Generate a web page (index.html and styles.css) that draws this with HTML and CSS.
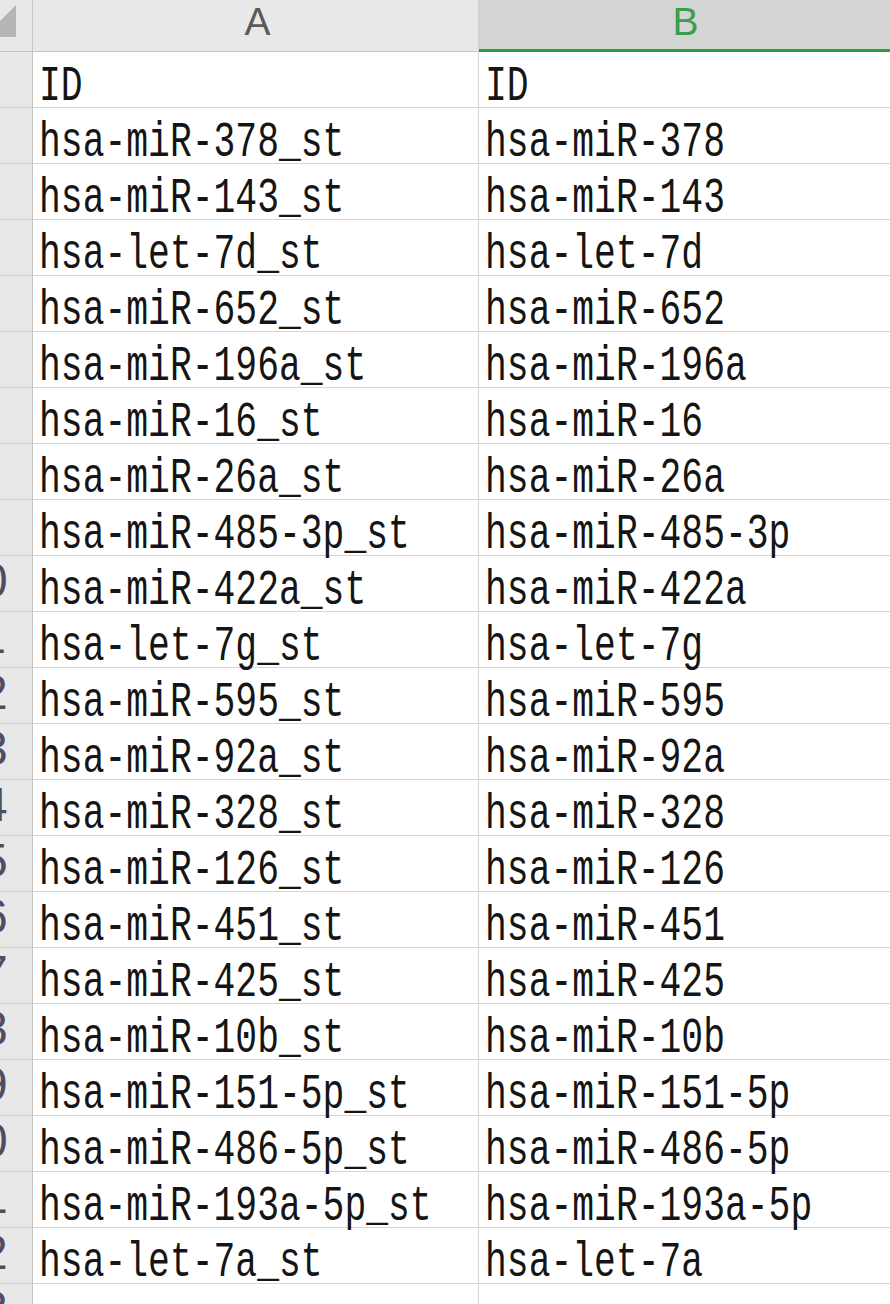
FILE: index.html
```html
<!DOCTYPE html>
<html>
<head>
<meta charset="utf-8">
<link rel="stylesheet" href="styles.css">
<title>Sheet</title>
</head>
<body>
<div class="sheet">
  <div class="corner"><svg class="tri" width="17" height="40" viewBox="0 0 17 40"><polygon points="16,5 16,37 0,37 0,21" fill="#b5b5b5"/></svg></div>
  <div class="colhead">A</div>
  <div class="colhead sel">B</div>

  <div class="rowhead"><span class="num">1</span></div><div class="cell"><span class="t">ID</span></div><div class="cell"><span class="t">ID</span></div>
  <div class="rowhead"><span class="num">2</span></div><div class="cell"><span class="t">hsa-miR-378_st</span></div><div class="cell"><span class="t">hsa-miR-378</span></div>
  <div class="rowhead"><span class="num">3</span></div><div class="cell"><span class="t">hsa-miR-143_st</span></div><div class="cell"><span class="t">hsa-miR-143</span></div>
  <div class="rowhead"><span class="num">4</span></div><div class="cell"><span class="t">hsa-let-7d_st</span></div><div class="cell"><span class="t">hsa-let-7d</span></div>
  <div class="rowhead"><span class="num">5</span></div><div class="cell"><span class="t">hsa-miR-652_st</span></div><div class="cell"><span class="t">hsa-miR-652</span></div>
  <div class="rowhead"><span class="num">6</span></div><div class="cell"><span class="t">hsa-miR-196a_st</span></div><div class="cell"><span class="t">hsa-miR-196a</span></div>
  <div class="rowhead"><span class="num">7</span></div><div class="cell"><span class="t">hsa-miR-16_st</span></div><div class="cell"><span class="t">hsa-miR-16</span></div>
  <div class="rowhead"><span class="num">8</span></div><div class="cell"><span class="t">hsa-miR-26a_st</span></div><div class="cell"><span class="t">hsa-miR-26a</span></div>
  <div class="rowhead"><span class="num">9</span></div><div class="cell"><span class="t">hsa-miR-485-3p_st</span></div><div class="cell"><span class="t">hsa-miR-485-3p</span></div>
  <div class="rowhead"><span class="num">10</span></div><div class="cell"><span class="t">hsa-miR-422a_st</span></div><div class="cell"><span class="t">hsa-miR-422a</span></div>
  <div class="rowhead"><span class="num">11</span></div><div class="cell"><span class="t">hsa-let-7g_st</span></div><div class="cell"><span class="t">hsa-let-7g</span></div>
  <div class="rowhead"><span class="num">12</span></div><div class="cell"><span class="t">hsa-miR-595_st</span></div><div class="cell"><span class="t">hsa-miR-595</span></div>
  <div class="rowhead"><span class="num">13</span></div><div class="cell"><span class="t">hsa-miR-92a_st</span></div><div class="cell"><span class="t">hsa-miR-92a</span></div>
  <div class="rowhead"><span class="num">14</span></div><div class="cell"><span class="t">hsa-miR-328_st</span></div><div class="cell"><span class="t">hsa-miR-328</span></div>
  <div class="rowhead"><span class="num">15</span></div><div class="cell"><span class="t">hsa-miR-126_st</span></div><div class="cell"><span class="t">hsa-miR-126</span></div>
  <div class="rowhead"><span class="num">16</span></div><div class="cell"><span class="t">hsa-miR-451_st</span></div><div class="cell"><span class="t">hsa-miR-451</span></div>
  <div class="rowhead"><span class="num">17</span></div><div class="cell"><span class="t">hsa-miR-425_st</span></div><div class="cell"><span class="t">hsa-miR-425</span></div>
  <div class="rowhead"><span class="num">18</span></div><div class="cell"><span class="t">hsa-miR-10b_st</span></div><div class="cell"><span class="t">hsa-miR-10b</span></div>
  <div class="rowhead"><span class="num">19</span></div><div class="cell"><span class="t">hsa-miR-151-5p_st</span></div><div class="cell"><span class="t">hsa-miR-151-5p</span></div>
  <div class="rowhead"><span class="num">20</span></div><div class="cell"><span class="t">hsa-miR-486-5p_st</span></div><div class="cell"><span class="t">hsa-miR-486-5p</span></div>
  <div class="rowhead"><span class="num">21</span></div><div class="cell"><span class="t">hsa-miR-193a-5p_st</span></div><div class="cell"><span class="t">hsa-miR-193a-5p</span></div>
  <div class="rowhead"><span class="num">22</span></div><div class="cell"><span class="t">hsa-let-7a_st</span></div><div class="cell"><span class="t">hsa-let-7a</span></div>
  <div class="rowhead"><span class="num">23</span></div><div class="cell"></div><div class="cell"></div>
</div>
</body>
</html>
```

FILE: styles.css
```css
html, body {
  margin: 0;
  padding: 0;
  background: #ffffff;
  overflow: hidden;
}

.sheet {
  display: grid;
  grid-template-columns: 33px 446px 414px;
  grid-template-rows: 52px;
  grid-auto-rows: 56px;
  width: 893px;
}

.corner {
  box-sizing: border-box;
  background: #e8e8e8;
  border-right: 1px solid #c6c6c6;
  border-bottom: 1px solid #c6c6c6;
  overflow: hidden;
}

.tri {
  display: block;
}

.colhead {
  box-sizing: border-box;
  background: #e8e8e8;
  border-right: 1px solid #cfcfcf;
  border-bottom: 1px solid #c6c6c6;
  padding-left: 4px;
  font-family: "Liberation Sans", Arial, sans-serif;
  font-size: 39px;
  line-height: 43px;
  text-align: center;
  color: #5a5a5a;
}

.colhead.sel {
  padding-left: 0;
  background: #d4d4d4;
  color: #3a9e4c;
  border-bottom: 3px solid #2e9a44;
}

.rowhead {
  box-sizing: border-box;
  background: #e8e8e8;
  border-right: 1px solid #c6c6c6;
  border-bottom: 1px solid #cfcfcf;
  overflow: hidden;
  display: flex;
}

.num {
  flex: none;
  width: 80px;
  margin-left: -59px;
  text-align: center;
  font-family: "Liberation Sans", Arial, sans-serif;
  font-size: 48px;
  line-height: 49px;
  color: #4e4e62;
}

.cell {
  box-sizing: border-box;
  background: #ffffff;
  border-right: 1px solid #d6d6d6;
  border-bottom: 1px solid #d6d6d6;
  padding: 11px 0 0 6px;
  white-space: nowrap;
}

.t {
  display: inline-block;
  font-family: "Liberation Mono", monospace;
  font-size: 50px;
  line-height: 48px;
  color: #151515;
  transform: scaleX(0.727);
  transform-origin: 0 50%;
}
```
